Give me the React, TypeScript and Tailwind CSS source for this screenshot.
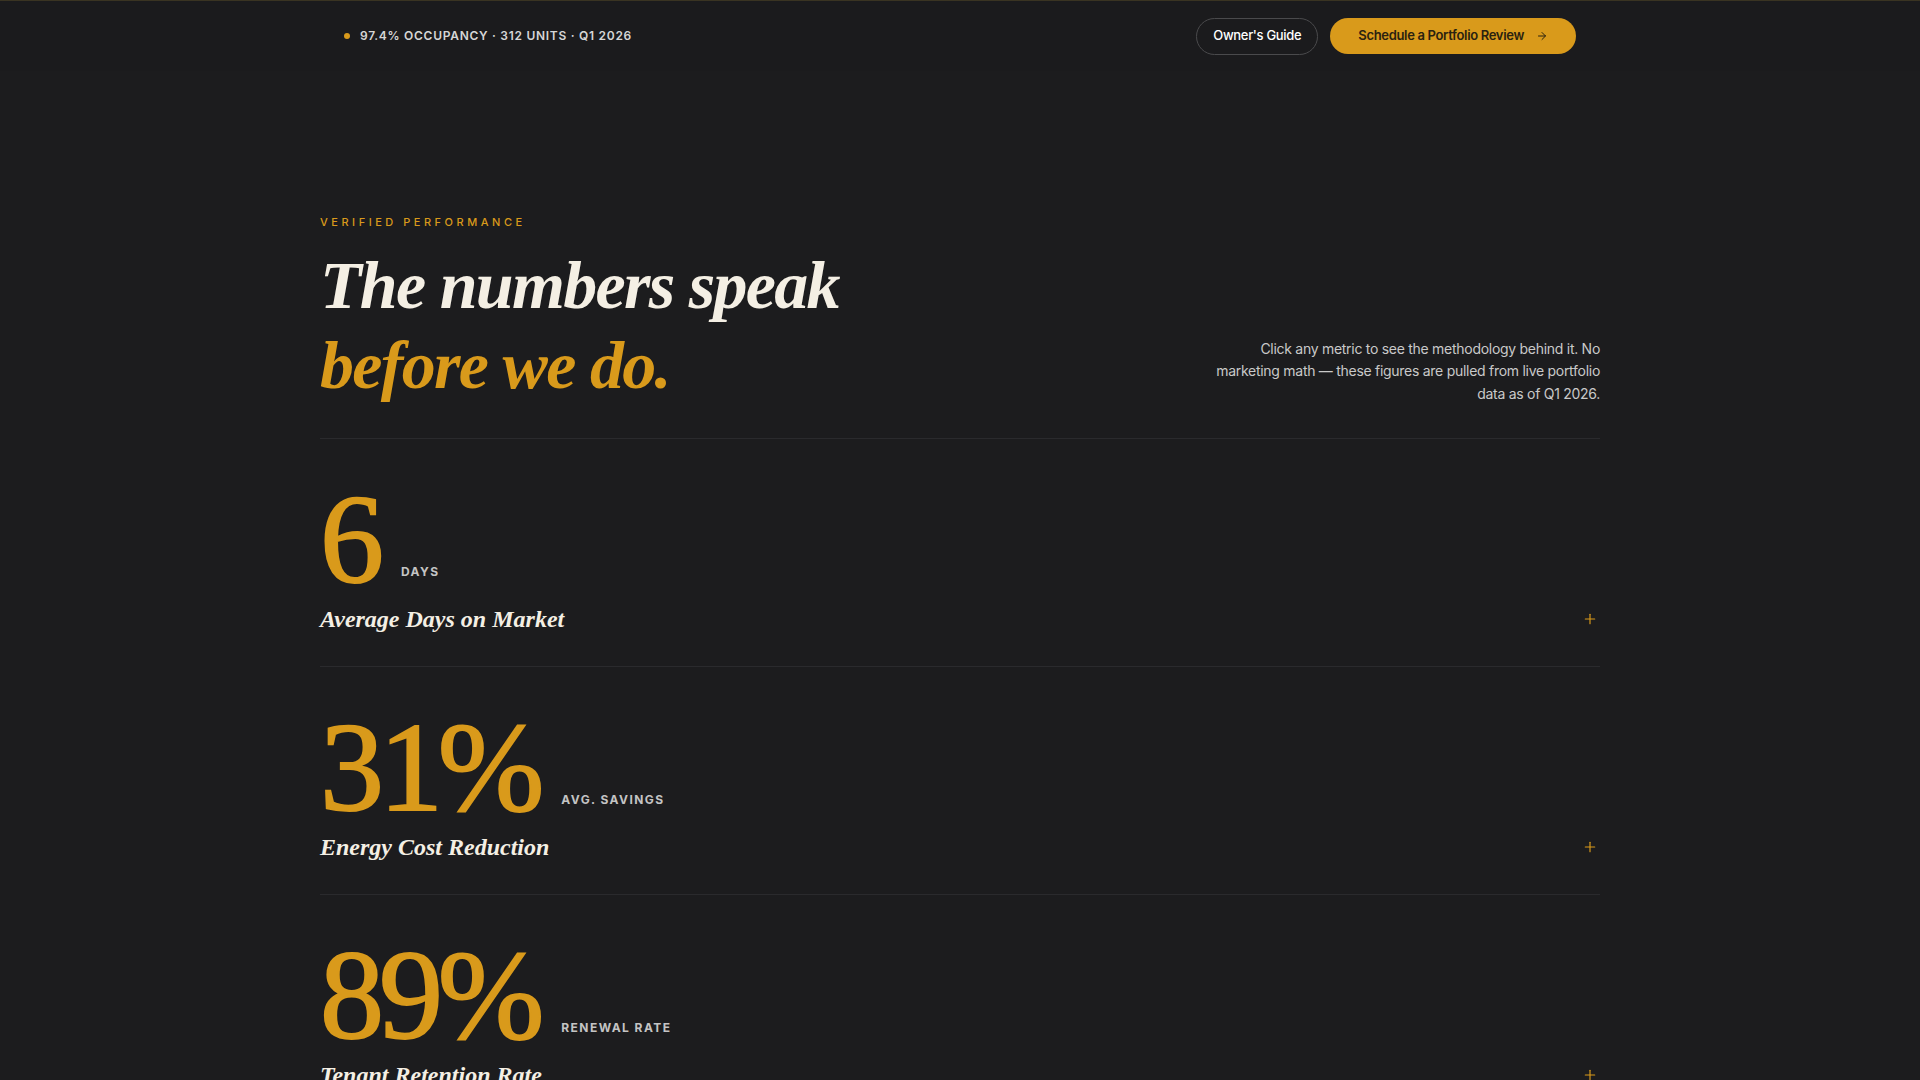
import React from "react";
import { Plus, ArrowRight } from "lucide-react";

type Metric = {
  value: string;
  unit: string;
  title: string;
};

const metrics: Metric[] = [
  { value: "6", unit: "Days", title: "Average Days on Market" },
  { value: "31%", unit: "Avg. Savings", title: "Energy Cost Reduction" },
  { value: "89%", unit: "Renewal Rate", title: "Tenant Retention Rate" },
];

const serif = "font-['Liberation_Serif',_'DejaVu_Serif',_serif]";
const sans = "font-['Inter',_'Noto_Sans',_sans-serif]";

function MetricRow({ metric }: { metric: Metric }) {
  return (
    <button className="block w-full text-left border-b border-[#2a2a2d] pt-9 pb-[31px] group">
      <div className="flex items-end gap-[22px]">
        <span
          className={`${serif} text-[128px] leading-none tracking-[-0.04em] text-[#d99a1b] [-webkit-text-stroke:2px_#d99a1b]`}
        >
          {metric.value}
        </span>
        <span className={`${sans} pb-[22px] text-[12px] font-bold uppercase tracking-[0.12em] text-[#c4c4c4]`}>
          {metric.unit}
        </span>
      </div>
      <div className="flex items-center justify-between">
        <h3 className={`${serif} text-[24px] leading-8 font-bold italic text-[#f4efe4]`}>
          {metric.title}
        </h3>
        <Plus className="mr-[2px] h-4 w-4 text-[#d99a1b]" strokeWidth={1.75} />
      </div>
    </button>
  );
}

export default function App() {
  return (
    <div className={`min-h-screen bg-[#1c1c1e] border-t border-[#3a3422] ${sans}`}>
      {/* Top bar */}
      <header className="bg-[#1b1b1d]">
        <div className="mx-auto flex h-[70px] max-w-[1280px] items-center justify-between px-6">
          <div className="flex items-center gap-[10px]">
            <span className="h-[6px] w-[6px] rounded-full bg-[#d99a1b]" />
            <span className="text-[12px] font-semibold uppercase tracking-[0.06em] text-[#d6d6d6]">
              97.4% Occupancy · 312 Units · Q1 2026
            </span>
          </div>
          <div className="flex items-center gap-3">
            <button className="h-[37px] rounded-full border border-[#4a4a4c] px-4 text-[13px] font-medium tracking-tight text-white">
              Owner's Guide
            </button>
            <button className="flex h-[36px] items-center gap-3 rounded-full bg-[#d99a1b] px-7 text-[13px] font-semibold tracking-tight text-[#2a2210]">
              Schedule a Portfolio Review
              <ArrowRight className="h-3 w-3" strokeWidth={2} />
            </button>
          </div>
        </div>
      </header>

      {/* Performance section */}
      <section className="mx-auto max-w-[1280px] pt-[143px]">
        <div className="flex items-end justify-between border-b border-[#2a2a2d] pb-[33px]">
          <div>
            <p className="mb-[15px] text-[11px] font-medium uppercase leading-4 tracking-[0.32em] text-[#d99a1b]">
              Verified Performance
            </p>
            <h2 className={`${serif} text-[68px] font-bold italic leading-[80px] tracking-tight text-[#f4efe4]`}>
              The numbers speak
              <br />
              <span className="text-[#d99a1b]">before we do.</span>
            </h2>
          </div>
          <p className="whitespace-nowrap text-right text-[14px] leading-[22.5px] tracking-[-0.02em] text-[#c9c9c9]">
            Click any metric to see the methodology behind it. No
            <br />
            marketing math — these figures are pulled from live portfolio
            <br />
            data as of Q1 2026.
          </p>
        </div>

        <div>
          {metrics.map((m) => (
            <MetricRow key={m.title} metric={m} />
          ))}
        </div>
      </section>
    </div>
  );
}
